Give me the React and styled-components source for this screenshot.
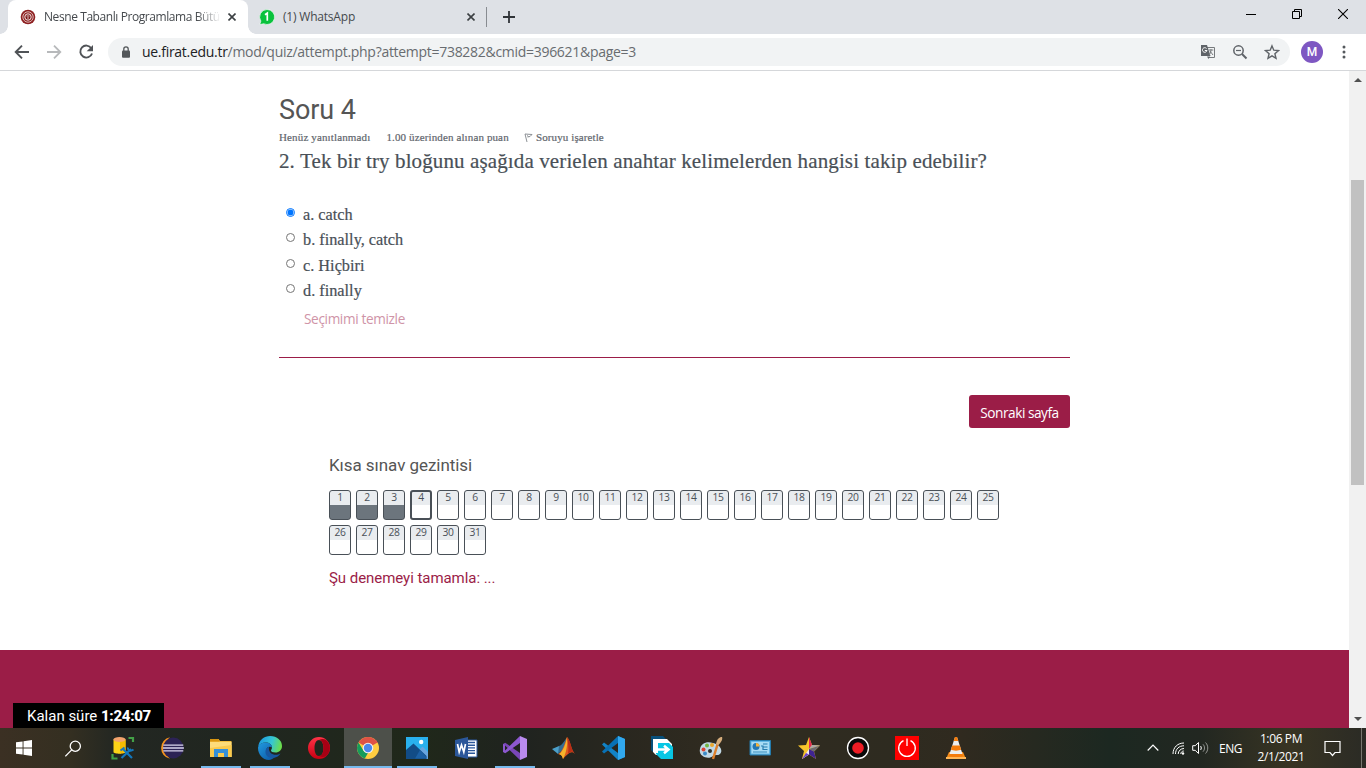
import React from 'react';
import styled, { createGlobalStyle, css } from 'styled-components';

const SANS = "'Open Sans', 'Noto Sans', sans-serif";
const SERIF = "'Liberation Serif', serif";
const CRIMSON = '#9b1d47';

const GlobalStyle = createGlobalStyle`
  * { box-sizing: border-box; }
  body { margin: 0; overflow: hidden; background: #fff; font-family: ${SANS}; }
  h3, h5, p { margin: 0; font-weight: 400; }
  svg { display: block; flex: none; }
`;

const Screen = styled.div`
  width: 1366px;
  height: 768px;
  display: flex;
  flex-direction: column;
  overflow: hidden;
`;

/* Browser chrome */
const TabStrip = styled.div`
  height: 34px;
  flex: none;
  display: flex;
  align-items: flex-start;
  background: #dee1e6;
  padding-left: 8px;
`;
const Tab = styled.div`
  position: relative;
  height: 34px;
  width: ${p => p.$width}px;
  display: flex;
  align-items: center;
  padding-left: ${p => (p.$active ? 12 : 11)}px;
  border-radius: 8px 8px 0 0;
  ${p => p.$active && css`
    background: #fff;
    &::before, &::after {
      content: '';
      position: absolute;
      bottom: 0;
      width: 8px;
      height: 8px;
    }
    &::before { left: -8px; background: radial-gradient(circle at 0 0, transparent 7.5px, #fff 8px); }
    &::after { right: -8px; background: radial-gradient(circle at 100% 0, transparent 7.5px, #fff 8px); }
  `}
`;
const TabTitle = styled.span`
  width: ${p => p.$width}px;
  margin-left: 8px;
  margin-right: ${p => p.$after || 0}px;
  white-space: nowrap;
  font-size: 12px;
  line-height: 18px;
  letter-spacing: ${p => p.$spacing}px;
  color: #45494d;
  ${p => p.$fade && css`mask-image: linear-gradient(90deg, #000 152px, transparent 177px);`}
`;
const TabDivider = styled.i`
  width: 1px;
  height: 20px;
  margin: 7px 16px 0 0;
  background: #888c91;
`;
const NewTab = styled.div`
  padding-top: 11px;
`;
const WindowButtons = styled.div`
  margin-left: auto;
  display: flex;
  align-items: center;
  height: 28px;
  gap: 36px;
  padding-right: 18px;
`;
const Toolbar = styled.div`
  height: 37px;
  flex: none;
  display: flex;
  align-items: center;
  background: #fff;
  border-bottom: 1px solid #d5d7da;
  padding-left: 14px;
`;
const NavIcons = styled.div`
  display: flex;
  gap: 16px;
`;
const AddressBar = styled.div`
  width: 1182px;
  height: 28px;
  flex: none;
  margin-left: 14px;
  display: flex;
  align-items: center;
  padding: 0 10px 0 13px;
  border-radius: 14px;
  background: #f1f3f4;
`;
const Url = styled.span`
  flex: 1;
  margin-left: 11px;
  font-size: 14px;
  line-height: 20px;
  letter-spacing: -0.29px;
  white-space: nowrap;
  color: #686c70;
  b { font-weight: 400; color: #202124; }
`;
const AddressActions = styled.div`
  display: flex;
  gap: 16px;
`;
const Avatar = styled.div`
  width: 22px;
  height: 22px;
  margin: 0 13px 0 11px;
  border-radius: 50%;
  background: #7e57c2;
  color: #fff;
  font: 500 12px/22px Roboto, sans-serif;
  text-align: center;
`;

/* Web page */
const Viewport = styled.div`
  height: 657px;
  flex: none;
  display: flex;
`;
const Page = styled.main`
  width: 1349px;
  display: flex;
  flex-direction: column;
  justify-content: space-between;
  background: #fff;
`;
const Content = styled.section`
  width: 791px;
  margin-left: 279px;
  padding-top: 22px;
  color: #495057;
`;
const QuestionTitle = styled.h3`
  font: 400 27px/34px Roboto, sans-serif;
  color: #555;
  letter-spacing: -0.1px;
`;
const Meta = styled.div`
  display: flex;
  align-items: center;
  height: 14px;
  margin: 3px 0 1px;
  font: 11px/14px ${SERIF};
  color: #5f666d;
  -webkit-text-stroke: 0.2px;
  white-space: nowrap;
`;
const MetaText = styled.span`
  width: ${p => p.$width}px;
  letter-spacing: ${p => p.$spacing}px;
`;
const FlagBox = styled.span`
  width: 12px;
`;
const QuestionText = styled.p`
  height: 32px;
  font: 21px/32px ${SERIF};
  letter-spacing: 0.12px;
  -webkit-text-stroke: 0.2px;
  white-space: nowrap;
`;
const Answers = styled.div`
  padding: 25px 0 0 7px;
`;
const Answer = styled.label`
  display: flex;
  height: 25.3px;
  font: 16.3px/26px ${SERIF};
  -webkit-text-stroke: 0.2px;
`;
const Radio = styled.i`
  width: 9px;
  height: 9px;
  margin: 6px 8px 0 0;
  border-radius: 50%;
  border: 1px solid ${p => (p.$checked ? '#0075ff' : '#767676')};
  background: ${p => (p.$checked ? 'radial-gradient(circle, #0075ff 2.7px, #fff 3.3px)' : '#fff')};
`;
const ClearChoice = styled.p`
  margin: 6px 0 0 18px;
  font-size: 13.6px;
  line-height: 20px;
  letter-spacing: -0.35px;
  color: #cf94a7;
`;
const Rule = styled.div`
  height: 1px;
  margin-top: 28px;
  background: ${CRIMSON};
`;
const SubmitRow = styled.div`
  display: flex;
  justify-content: flex-end;
  padding-top: 37px;
`;
const NextButton = styled.div`
  width: 101px;
  height: 33px;
  border-radius: 3px;
  background: ${CRIMSON};
  color: #fff;
  font-size: 13.7px;
  line-height: 36px;
  letter-spacing: -0.48px;
  text-align: center;
  white-space: nowrap;
`;
const QuizNav = styled.nav`
  padding: 26px 50px 0;
`;
const NavTitle = styled.h5`
  font: 400 17px/22px Roboto, sans-serif;
  letter-spacing: -0.05px;
  color: #555;
`;
const NumberGrid = styled.div`
  display: flex;
  flex-wrap: wrap;
  gap: 5px;
  margin-top: 14px;
`;
const NumberBox = styled.div`
  width: 22px;
  height: 30px;
  border: ${p => (p.$current ? 2 : 1)}px solid #495057;
  border-radius: 3px;
  background: linear-gradient(#e9ecef ${p => (p.$current ? 13 : 14)}px, ${p => (p.$answered ? '#6c757d' : '#fff')} 0);
  color: #495057;
  font-size: 10.3px;
  letter-spacing: -0.3px;
  line-height: ${p => (p.$current ? 10 : 12)}px;
  text-align: center;
`;
const FinishLink = styled.p`
  margin-top: 13px;
  font: 15px/20px Roboto, sans-serif;
  letter-spacing: -0.05px;
  color: ${CRIMSON};
`;
const Footer = styled.footer`
  height: 78px;
  display: flex;
  align-items: flex-end;
  padding-left: 13px;
  background: ${CRIMSON};
`;
const Timer = styled.div`
  width: 151px;
  height: 25px;
  padding-left: 14px;
  background: #000;
  color: #fff;
  font: 15px/26px Roboto, sans-serif;
  white-space: nowrap;
  b { font-weight: 800; letter-spacing: -0.3px; }
`;
const Scrollbar = styled.div`
  width: 17px;
  display: flex;
  flex-direction: column;
  align-items: center;
  padding: 7px 0 7px;
  background: #f1f1f1;
`;
const Arrow = styled.i`
  border: 4px solid transparent;
  ${p => (p.$up ? 'border-top: 0; border-bottom-color: #505050;' : 'border-bottom: 0; border-top-color: #505050;')}
`;
const Thumb = styled.div`
  width: 13px;
  height: 305px;
  margin: 98px 0 auto;
  background: #c1c1c1;
`;

/* Desktop taskbar */
const Taskbar = styled.div`
  height: 40px;
  flex: none;
  display: flex;
  background: linear-gradient(90deg, #3b3023 0, #342f21 70px, #232722 115px, #202620 230px, #20281a 420px, #1f231f 520px, #29271f 620px, #302b20 720px, #2e2b20 900px, #302a1f 960px, #1c2821 1110px, #222721 1200px, #383423 1290px, #2b2b25 1366px);
`;
const TaskCell = styled.div`
  position: relative;
  width: ${p => p.$width || 49}px;
  display: flex;
  align-items: center;
  justify-content: center;
  background: ${p => (p.$focused ? 'linear-gradient(90deg, transparent 1px, #4d504a 1px)' : 'none')};
  ${p => p.$running && css`
    &::after {
      content: '';
      position: absolute;
      bottom: 0;
      left: ${p.$focused ? 1 : 5}px;
      right: ${p.$focused ? 0 : 4}px;
      height: 2px;
      background: #76b9ed;
    }
  `}
`;
const Tray = styled.div`
  margin-left: auto;
  display: flex;
  align-items: center;
  color: #fff;
  font-size: 12px;
`;
const TrayIcon = styled.div`
  margin-right: ${p => p.$gap}px;
`;
const Language = styled.span`
  width: 32px;
  letter-spacing: -0.5px;
`;
const Clock = styled.div`
  width: 60px;
  margin-right: 13px;
  text-align: center;
  line-height: 18px;
  letter-spacing: -0.38px;
  white-space: nowrap;
`;
const ShowDesktop = styled.i`
  align-self: stretch;
  width: 5px;
  margin-left: 20px;
  border-left: 1px solid #77776f;
`;

const Icon = ({ s = 24, h, vb = 24, children, ...rest }) => (
  <svg width={s} height={h || s} viewBox={typeof vb === 'string' ? vb : `0 0 ${vb} ${vb}`} fill="none" {...rest}>{children}</svg>
);

const TabClose = () => <Icon s={8} vb={8}><path d="M.5.5l7 7M7.5.5l-7 7" stroke="#3c4043" strokeWidth="1.6" /></Icon>;

const FiratLogo = () => (
  <Icon s={16} vb={16}>
    <circle cx="8" cy="8" r="7.3" fill="#8e2022" />
    <circle cx="8" cy="8" r="5.2" stroke="#dcb9b5" strokeWidth="1" />
    <circle cx="8" cy="8" r="3.2" fill="#7b1519" stroke="#f3e5e2" strokeWidth="1" />
    <path d="M6.5 7h3M7 9h2" stroke="#e4cac6" />
  </Icon>
);
const WhatsAppBadge = () => (
  <Icon s={16} vb={16}>
    <path d="M8 .5a7.5 7.5 0 1 1-3.3 14.2L.8 15.6l1.1-3.5A7.5 7.5 0 0 1 8 .5z" fill="#09c23d" stroke="#fff" strokeWidth=".6" />
    <path d="M6 5.8L8.3 4.2v7.5" stroke="#fff" strokeWidth="1.7" />
  </Icon>
);

const StartIcon = () => (
  <Icon s={16} vb={16} fill="#fff"><path d="M0 2.3l6.6-.9v6.1H0zM7.5 1.2L16 0v7.5H7.5zM0 8.4h6.6v6.2L0 13.7zM7.5 8.4H16V16l-8.5-1.2z" /></Icon>
);
const SearchIcon = () => (
  <Icon s={17} vb={17} stroke="#fff" strokeWidth="1.3"><circle cx="10.3" cy="6.2" r="5.1" /><path d="M6.700 9.900L.3 16.300" /></Icon>
);
const SqlIcon = () => (
  <Icon>
    <path d="M17.500 2h4.500v4M1.500 18v4.500h5" stroke="#43a047" strokeWidth="2.200" />
    <path d="M2.500 3.500v12.500c0 2.300 12 2.300 12 0V3.500z" fill="#fdd317" />
    <path d="M9 3.500h5.500V16L9 17.500z" fill="#f5bb00" />
    <ellipse cx="8.500" cy="3.500" rx="6" ry="2.400" fill="#f2a36d" />
    <path d="M11.500 12.500l9.500 9.500M20 13l-9.500 9" stroke="#1477bd" strokeWidth="2.200" />
    <path d="M9.500 14.500l4-3M17 11.500c-.5 3.500 3 4 5.500 2" stroke="#1477bd" strokeWidth="1.900" />
  </Icon>
);
const EclipseIcon = () => (
  <Icon>
    <path d="M10 1.200a11 11 0 0 0 0 21.600C4 18 4 6 10 1.200z" fill="#f7941e" />
    <circle cx="13.300" cy="12" r="10.400" fill="#2c2255" />
    <path d="M3.300 9.200h20M2.900 12h21M3.300 14.800h20" stroke="#d9d5ee" strokeWidth="1.300" />
  </Icon>
);
const FolderIcon = () => (
  <Icon>
    <path d="M1 3h8.500l1.500 2h11.500v16H1z" fill="#f4bd3c" />
    <path d="M1 3h8.500l1 2.500H1z" fill="#d89510" />
    <path d="M1 6h21.500v15H1z" fill="#fddc7a" />
    <path d="M1 12l21.500-3v12H1z" fill="#fbca4c" />
    <path d="M5 21v-8h14v8h-4v-4H9v4z" fill="#3690d8" />
  </Icon>
);
const EdgeIcon = () => (
  <Icon>
    <defs>
      <linearGradient id="edgeTop" x1="2" y1="4" x2="23" y2="10" gradientUnits="userSpaceOnUse"><stop stopColor="#1e9de0" /><stop offset=".55" stopColor="#36c6d4" /><stop offset="1" stopColor="#6bde4c" /></linearGradient>
      <linearGradient id="edgeLow" x1="0" y1="8" x2="14" y2="24" gradientUnits="userSpaceOnUse"><stop stopColor="#2197dc" /><stop offset="1" stopColor="#0c5ba8" /></linearGradient>
    </defs>
    <path d="M.2 10.500C1.200 4 6.200 0 12.200 0 19 0 24 4.500 24 10c0 4-3 6.500-6.500 6.500-3 0-4.500-1-4.500-2 0-.8 1-1.200 1-3C14 8.500 11 6.500 7.800 6.500 4 6.500 1.500 8.200.2 10.500z" fill="url(#edgeTop)" />
    <path d="M.1 11C1 8 4 6.400 7.800 6.400c3.700 0 6.300 2.400 6.200 5.100-2-1.800-6-.5-6 3.500s4.500 6.500 8.500 6.200c-2 1.800-3.800 2.600-5.500 2.700C4 23.600-.5 17.500.1 11z" fill="url(#edgeLow)" />
    <path d="M11 10.700c-2.500.7-4 3.200-3.500 6 .8 4.800 6.500 6.500 11 4.400 1.700-.8 3.200-2.200 4-3.600-4.500 2.600-12.500 1.500-11.500-6.800z" fill="#1757a0" />
  </Icon>
);
const OperaIcon = () => (
  <Icon><defs><linearGradient id="operaRed" x1="0" y1="0" x2="0" y2="1"><stop stopColor="#ff3347" /><stop offset="1" stopColor="#c80012" /></linearGradient></defs>
    <path fillRule="evenodd" d="M12 1a11 11 0 1 0 0 22 11 11 0 0 0 0-22zm0 3c2.800 0 4.500 3.500 4.500 8S14.800 20 12 20s-4.500-3.500-4.500-8S9.200 4 12 4z" fill="url(#operaRed)" />
    <path d="M12 4c4-2 7-.7 9 2 2.600 3.500 2.600 8.500 0 12-2 2.700-5 4-9 2 2.800 0 4.500-3.500 4.500-8S14.800 4 12 4z" fill="#a70014" />
  </Icon>
);
const ChromeIcon = () => (
  <Icon>
    <circle cx="12" cy="12" r="11" fill="#ffcd40" />
    <path d="M12 12L2.500 6.500A11 11 0 0 1 21.500 6.500z" fill="#de5246" /><path d="M12 7h9.800L20 4.500H8z" fill="#de5246" />
    <path d="M2.500 6.500L7.700 15l4.300 2-3.200 5.500A11 11 0 0 1 2.500 6.500z" fill="#169b5b" />
    <circle cx="12" cy="12" r="5.300" fill="#f1f1f1" /><circle cx="12" cy="12" r="4.200" fill="#4b87ec" />
  </Icon>
);
const PhotosIcon = () => (
  <Icon><path d="M1 1h22v22H1z" fill="#29b1ee" /><path d="M11 17l6.500-6.500L23 16v7H11z" fill="#68a5df" /><path d="M1 14l7.500-6.500L21.500 20v3H1z" fill="#124c86" /><path d="M15 14l7.500 8.500H10z" fill="#2169b0" opacity=".7" /><circle cx="16.200" cy="6" r="2.200" fill="#fff" /></Icon>
);
const WordIcon = () => (
  <Icon>
    <path d="M12 4h11v17H12z" fill="#fff" stroke="#2b579a" />
    <path d="M14 6.500h7M14 9.200h7M14 11.900h7M14 14.600h7M14 17.300h7" stroke="#2b579a" strokeWidth="1.400" />
    <path d="M1 4l13-3v22L1 20z" fill="#2b579a" />
    <path d="M3.500 8l1.700 8L7.500 9l2.300 7 1.700-8" stroke="#fff" strokeWidth="1.700" />
  </Icon>
);
const StudioIcon = () => (
  <Icon>
    <path d="M0 8l2.200-1.200L17 17V24L2 9.500V15L0 16z" fill="#7a46b8" />
    <path d="M0 16l2.200 1.200L17 7V0L2 14.500V9L0 8z" fill="#8d58d0" />
    <path d="M17 0l7 3v18l-7 3z" fill="#b98bee" />
  </Icon>
);
const MatlabIcon = () => (
  <Icon>
    <path d="M0 13l7-3 3 2-4 6z" fill="#4b9fc9" /><path d="M7 10c4-1 6-7 8-8l-2 10-7 6z" fill="#356d91" />
    <path d="M15 1c3 2 4 13 8 17-4-4-7 0-12 5-1-5-3-4-5-5 4-1 7-11 9-17z" fill="#df591d" />
    <path d="M15 1c1 7-1 17-4 22-1-4-2-4-4-5 4-2 7-11 8-17z" fill="#f5b42c" /><path d="M15 1c4 4 4 13 8 17-3-4-5-2-7 0 1-6 0-12-1-17z" fill="#b92e17" />
  </Icon>
);
const CodeIcon = () => (
  <Icon>
    <path d="M17 0l7 3v18l-7 3L1 8.500 3 6.500 17 17z" fill="#1283c6" />
    <path d="M3 17.500L1 15.500 17 0v7z" fill="#0871b5" /><path d="M17 0l7 3v18l-7 3z" fill="#31a8ee" />
  </Icon>
);
const ShareIcon = () => (
  <Icon>
    <path d="M1 0h12l3 3H5v13H3l-2-2z" fill="#084f7a" />
    <path d="M3 3h14l5 5v3H8v8H6l-3-3z" fill="#fff" />
    <path d="M8 7h11l4 4v12H11l-5-5v-1h2z" fill="#08c6e4" />
    <path d="M7 13.500h10M14 9.800l4.500 3.700-4.500 3.700" stroke="#fff" strokeWidth="2.500" />
  </Icon>
);
const PaintIcon = () => (
  <Icon>
    <path d="M1 13C2 7 8 5 14 7c8 2 10 8 7 11-2 2-5 0-7 2-4 4-15 1-13-7z" fill="#c1d9e6" />
    <circle cx="4.500" cy="13.500" r="2" fill="#dc4334" /><circle cx="8" cy="9.500" r="2" fill="#74b541" /><circle cx="13" cy="9" r="2" fill="#e8a62e" /><circle cx="6" cy="17.500" r="2" fill="#3b8cc9" /><circle cx="11" cy="15" r="2" fill="#2d302b" />
    <path d="M14 23L19 7" stroke="#dd802c" strokeWidth="2.400" /><path d="M17 8c1-5 3-7 6-7 1 2-1 6-4 8z" fill="#d6ad7c" />
  </Icon>
);
const PanelIcon = () => (
  <Icon><path d="M2 4.500h20.500v14.500H2z" fill="#62b6e4" stroke="#247bac" /><path d="M3.500 6h17.500v11.500H3.500z" fill="#a9dcf4" /><circle cx="8" cy="10.500" r="3.500" fill="#2477b3" /><path d="M8 10.500V7a3.500 3.500 0 0 1 3.500 3.500z" fill="#f8b437" /><path d="M13 10h2v4M15 8h4.500M15 11h4.500M15 13.500h4.500" stroke="#277cae" strokeWidth="1.200" /><path d="M5 16h14" stroke="#398ebf" /></Icon>
);
const StarAppIcon = () => (
  <Icon>
    <path d="M12 1l3 8 8 .5-6 6 2 7.500-7-4.500L5 23l2-8-6-5.500 8-.5z" fill="#f7c52b" />
    <path d="M12 1l3 8-3 4z" fill="#e22a58" /><path d="M15 9l8 .5L12 13z" fill="#a9a9ac" /><path d="M23 9.500l-6 6-5-2.500z" fill="#6c6c72" />
    <path d="M12 13l5 2.500 2 7.500-7-4.500z" fill="#3f2492" /><path d="M12 13v5.500L5 23z" fill="#efe8f8" /><path d="M12 18.500L5 23l4-6z" fill="#6b43c8" />
  </Icon>
);
const RecordIcon = () => (
  <Icon><circle cx="12" cy="12" r="10.500" fill="#090909" stroke="#fff" strokeWidth="1.300" /><circle cx="12" cy="12" r="5.800" fill="#ed1c24" /></Icon>
);
const PowerIcon = () => (
  <Icon><path d="M0 0h24v24H0z" fill="#f00" /><path d="M8.500 4.600a8.300 8.300 0 1 0 7 0M12 2.500V10" stroke="#fff" strokeWidth="1.300" /></Icon>
);
const VlcIcon = () => (
  <Icon><path d="M5 16h14l3 7H2z" fill="#f48b16" /><path d="M11 1h2l5.500 17c-2 2-11 2-13 0z" fill="#ededed" /><path d="M11 1h2l1.300 4H9.700zM8.200 9.500h7.600l1.300 4C15 15 9 15 6.900 13.500zM5.500 18h13l.5 2c-3 1.500-11 1.500-14 0z" fill="#f47b0b" /><path d="M2 22h20" stroke="#ffb657" strokeWidth="2" /></Icon>
);

const apps = [
  [SqlIcon], [EclipseIcon], [FolderIcon, true], [EdgeIcon, true], [OperaIcon], [ChromeIcon, true, true], [PhotosIcon, true], [WordIcon], [StudioIcon, true],
  [MatlabIcon], [CodeIcon], [ShareIcon], [PaintIcon], [PanelIcon], [StarAppIcon], [RecordIcon], [PowerIcon], [VlcIcon],
];
const answers = ['a. catch', 'b. finally, catch', 'c. Hiçbiri', 'd. finally'];
const questions = Array.from({ length: 31 }, (_, i) => i + 1);

export default function App() {
  return (
    <Screen>
      <GlobalStyle />
      <TabStrip>
        <Tab $active $width={240}>
          <FiratLogo />
          <TabTitle $width={177} $after={7} $spacing={-0.42} $fade>Nesne Tabanlı Programlama Bütü</TabTitle>
          <TabClose />
        </Tab>
        <Tab $width={238}>
          <WhatsAppBadge />
          <TabTitle $width={184} $spacing={-0.2}>(1) WhatsApp</TabTitle>
          <TabClose />
        </Tab>
        <TabDivider />
        <NewTab><Icon s={12} vb={12}><path d="M6 0v12M0 6h12" stroke="#303438" strokeWidth="1.8" /></Icon></NewTab>
        <WindowButtons>
          <Icon s={10} vb={10}><path d="M0 5.500h10" stroke="#000" /></Icon>
          <Icon s={10} vb={10} stroke="#000"><path d="M.5 2.500h7v7h-7zM2.500 2.500v-2h7v7h-2" /></Icon>
          <Icon s={10} vb={10}><path d="M0 0l10 10M10 0L0 10" stroke="#000" strokeWidth="1.1" /></Icon>
        </WindowButtons>
      </TabStrip>

      <Toolbar>
        <NavIcons>
          <Icon s={16} vb={16} stroke="#505357" strokeWidth="1.9"><path d="M15 8H2M8 1.700L1.700 8 8 14.300" /></Icon>
          <Icon s={16} vb={16} stroke="#b7b9bb" strokeWidth="1.8"><path d="M1 8h13M8 1.700L14.300 8 8 14.300" /></Icon>
          <Icon s={16} vb={16}><path d="M13.300 4.200A6 6 0 1 0 14 9.500" stroke="#505357" strokeWidth="1.9" /><path d="M15 1v6.300H8.700z" fill="#505357" /></Icon>
        </NavIcons>
        <AddressBar>
          <Icon s={10} h={12} vb="0 0 10 12"><path d="M2.800 5V3a2.200 2.200 0 0 1 4.400 0v2" stroke="#53575a" strokeWidth="1.300" /><rect x="1" y="4.500" width="8" height="7.200" rx="1" fill="#53575a" /></Icon>
          <Url><b>ue.firat.edu.tr</b>/mod/quiz/attempt.php?attempt=738282&amp;cmid=396621&amp;page=3</Url>
          <AddressActions>
            <Icon s={16} vb={16}>
              <path d="M6.500 3.500h8v10H8" stroke="#777a7d" /><path d="M1 1h6l3.500 11H1z" fill="#5f6368" />
              <path d="M6.500 4.500A2.300 2.300 0 1 0 7 6.500H4.800" stroke="#fff" /><path d="M8.800 6h4.500M11 5v1c0 2-1 4-2 5M10 7l3 4" stroke="#777a7d" /><path d="M7 12.500h3L8.500 15z" fill="#5f6368" />
            </Icon>
            <Icon s={16} vb={16} stroke="#5f6368"><circle cx="6.500" cy="6.500" r="4.700" strokeWidth="1.500" /><path d="M10 10l4.500 4.500" strokeWidth="1.900" /><path d="M4 6.500h5" strokeWidth="1.200" /></Icon>
            <Icon s={16} vb={16}><path d="M8 1.900l1.800 4.300 4.700.4-3.600 3.100 1.100 4.600-4-2.500-4 2.500 1.100-4.600-3.600-3.100 4.700-.4z" stroke="#5f6368" strokeWidth="1.400" /></Icon>
          </AddressActions>
        </AddressBar>
        <Avatar>M</Avatar>
        <Icon s={16} vb={16} fill="#55595d"><circle cx="8" cy="3" r="1.500" /><circle cx="8" cy="8" r="1.500" /><circle cx="8" cy="13" r="1.500" /></Icon>
      </Toolbar>

      <Viewport>
        <Page>
          <Content>
            <QuestionTitle>Soru 4</QuestionTitle>
            <Meta>
              <MetaText $width={107.5} $spacing={0.14}>Henüz yanıtlanmadı</MetaText>
              <MetaText $width={137.5} $spacing={0.12}>1.00 üzerinden alınan puan</MetaText>
              <FlagBox><Icon s={9} vb={9}><path d="M1 1l7 .5L6 3.500 3.500 4M1 1l2 8M3 2.500l1.500 1" stroke="#80858a" strokeWidth=".9" /></Icon></FlagBox>
              <MetaText $spacing={0.1}>Soruyu işaretle</MetaText>
            </Meta>
            <QuestionText>2. Tek bir try bloğunu aşağıda verielen anahtar kelimelerden hangisi takip edebilir?</QuestionText>
            <Answers>
              {answers.map((text, i) => (
                <Answer key={text}><Radio $checked={i === 0} />{text}</Answer>
              ))}
              <ClearChoice>Seçimimi temizle</ClearChoice>
            </Answers>
            <Rule />
            <SubmitRow><NextButton>Sonraki sayfa</NextButton></SubmitRow>
            <QuizNav>
              <NavTitle>Kısa sınav gezintisi</NavTitle>
              <NumberGrid>
                {questions.map(n => <NumberBox key={n} $answered={n < 4} $current={n === 4}>{n}</NumberBox>)}
              </NumberGrid>
              <FinishLink>Şu denemeyi tamamla: ...</FinishLink>
            </QuizNav>
          </Content>
          <Footer><Timer>Kalan süre <b>1:24:07</b></Timer></Footer>
        </Page>
        <Scrollbar><Arrow $up /><Thumb /><Arrow /></Scrollbar>
      </Viewport>

      <Taskbar>
        <TaskCell $width={48}><StartIcon /></TaskCell>
        <TaskCell $width={50}><SearchIcon /></TaskCell>
        {apps.map(([Glyph, running, focused], i) => (
          <TaskCell key={i} $running={running} $focused={focused}><Glyph /></TaskCell>
        ))}
        <Tray>
          <TrayIcon $gap={13}><Icon s={12} h={8} vb="0 0 12 8"><path d="M.7 6.500L6 1.200l5.300 5.300" stroke="#fff" strokeWidth="1.200" /></Icon></TrayIcon>
          <TrayIcon $gap={7}><Icon s={13} vb={13} stroke="#fff"><path d="M1 12C1 5 6 1 12 1M3.500 12C3.500 7 7 3.800 12 3.800M6.200 12c0-3 2.500-5.500 5.800-5.500" strokeWidth="1" /><path d="M8.800 12c0-1.700 1.300-3 3-3" /><circle cx="11" cy="11.500" r="1.200" fill="#fff" stroke="none" /></Icon></TrayIcon>
          <TrayIcon $gap={10}><Icon s={17} h={14} vb="0 0 17 14" stroke="#fff"><path d="M.7 4.700h2.500L6.500 1.500v11L3.200 9.300H.7zM8.500 5c1 1 1 3 0 4" /><path d="M11 3.300c2 2 2 5.400 0 7.400M13.500 1.500c3 3 3 8 0 11" opacity=".5" /></Icon></TrayIcon>
          <Language>ENG</Language>
          <Clock>1:06 PM<br />2/1/2021</Clock>
          <Icon s={17} h={17} vb="0 0 17 17"><path d="M1 1.500h15v11h-5L8.500 15.500 6 12.500H1z" stroke="#fff" strokeWidth="1.200" /></Icon>
          <ShowDesktop />
        </Tray>
      </Taskbar>
    </Screen>
  );
}
